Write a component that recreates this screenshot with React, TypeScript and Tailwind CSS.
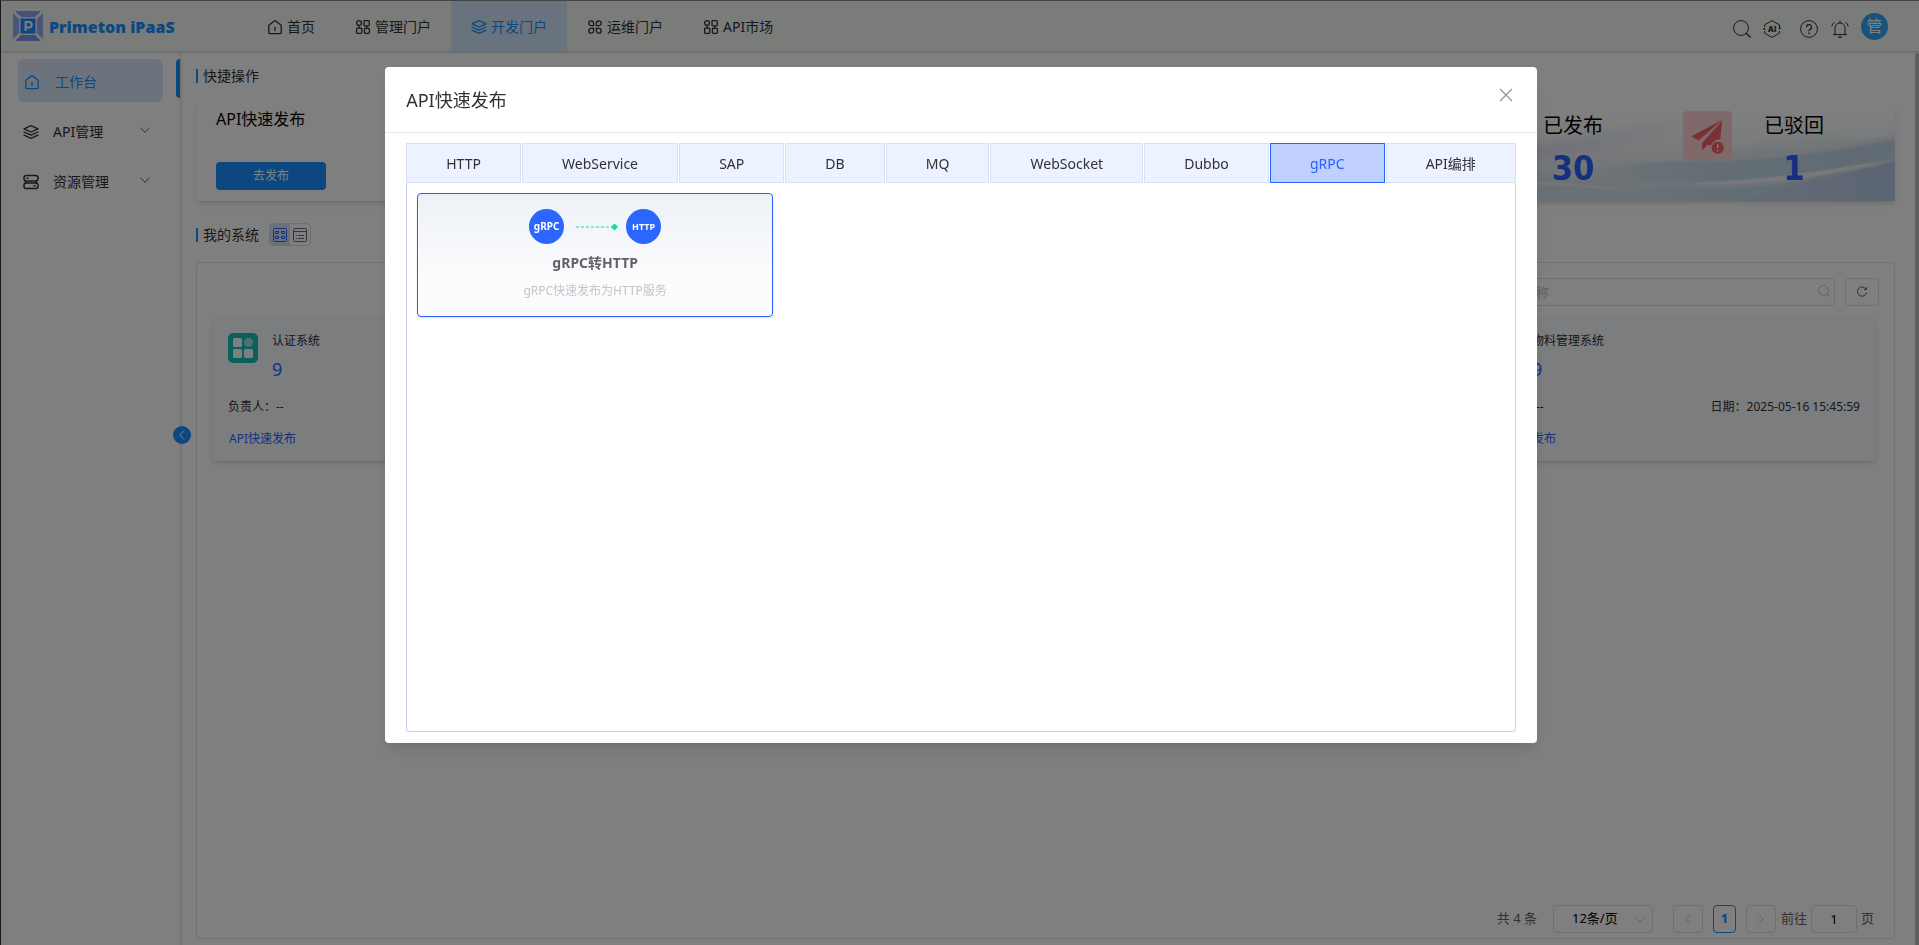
import React from 'react';

type IconProps = { className?: string };

const HomeIcon = ({ className }: IconProps) => (
  <svg viewBox="0 0 16 16" className={className} fill="none" stroke="currentColor" strokeWidth="1.3" strokeLinejoin="round" strokeLinecap="round">
    <path d="M1.8 6.2 8 1.4l6.2 4.8v7.2a1.2 1.2 0 0 1-1.2 1.2H3a1.2 1.2 0 0 1-1.2-1.2z" />
    <path d="M8 8.4v3.2" />
  </svg>
);

const BlocksIcon = ({ className }: IconProps) => (
  <svg viewBox="0 0 16 16" className={className} fill="none" stroke="currentColor" strokeWidth="1.3">
    <circle cx="4" cy="4" r="2.4" />
    <rect x="9" y="1.6" width="5.2" height="5.2" rx=".8" />
    <rect x="1.6" y="9.2" width="5.2" height="5.2" rx=".8" />
    <rect x="9.4" y="9.4" width="5" height="5" rx=".8" />
    <path d="M4 6.3v2.9M11.7 6.7v3" />
  </svg>
);

const CommandIcon = ({ className }: IconProps) => (
  <svg viewBox="0 0 16 16" className={className} fill="none" stroke="currentColor" strokeWidth="1.3">
    <path d="M6.6 6.6H4a2.4 2.4 0 1 1 2.6-2.6zM9.4 6.6H12A2.4 2.4 0 1 0 9.4 4zM6.6 9.4H4A2.4 2.4 0 1 0 6.6 12zM9.4 9.4H12A2.4 2.4 0 1 1 9.4 12z" />
  </svg>
);

const LayersIcon = ({ className }: IconProps) => (
  <svg viewBox="0 0 16 16" className={className} fill="none" stroke="currentColor" strokeWidth="1.3" strokeLinejoin="round" strokeLinecap="round">
    <path d="M8 1.6 15 4.8 8 8 1 4.8z" />
    <path d="M1 8 8 11.2 15 8" />
    <path d="M1 11.2 8 14.4l7-3.2" />
  </svg>
);

const ServerIcon = ({ className }: IconProps) => (
  <svg viewBox="0 0 16 16" className={className} fill="none" stroke="currentColor" strokeWidth="1.5" strokeLinecap="round">
    <rect x="1" y="1.4" width="14" height="5.6" rx="2.4" />
    <rect x="1" y="9" width="14" height="5.6" rx="2.4" />
    <path d="M4 4.2h1M11 11.8h1M2.4 7.4v1.4M13.6 7.4v1.4" />
  </svg>
);

const Chevron = ({ className }: IconProps) => (
  <svg viewBox="0 0 10 10" className={className} fill="none" stroke="currentColor" strokeWidth="1">
    <path d="M.5 2.8 5 7.2l4.5-4.4" />
  </svg>
);

const Logo = () => (
  <svg viewBox="0 0 30 30" className="size-[30px] shrink-0">
    <path d="M2 0h26l-6 6H8z" fill="#8fa3f0" />
    <path d="M2 30h26l-6-6H8z" fill="#8094e6" />
    <path d="M0 2v26l6-6V8z" fill="#98a9f2" />
    <path d="M30 2v26l-6-6V8z" fill="#98a9f2" />
    <rect x="7" y="7" width="16" height="16" fill="#1890ff" stroke="#e6edff" strokeWidth="1" />
    <path d="M12.6 20v-9H16a2.6 2.6 0 0 1 0 5.4h-3.2" fill="none" stroke="#fff" strokeWidth="2" />
  </svg>
);

const navItems = [
  { label: '首页', Icon: HomeIcon },
  { label: '管理门户', Icon: BlocksIcon },
  { label: '开发门户', Icon: LayersIcon, active: true },
  { label: '运维门户', Icon: CommandIcon },
  { label: 'API市场', Icon: BlocksIcon },
];

const Header = () => (
  <header className="relative z-10 flex h-[51px] shrink-0 items-center border-b border-[#d4d8e4] bg-[#f5f9f5] pl-3 pr-[31px] shadow-sm">
    <Logo />
    <span className="ml-1.5 w-[198px] pt-0.5 text-base font-black text-[#1890ff]">Primeton iPaaS</span>
    <nav className="flex h-full flex-1">
      {navItems.map(({ label, Icon, active }) => (
        <a
          key={label}
          href="#"
          className={`flex items-center gap-1 px-5 pt-0.5 text-sm ${active ? 'bg-[#d3e6fa] text-[#1890ff]' : 'text-[#303133]'}`}
        >
          <Icon className="size-4" />
          {label}
        </a>
      ))}
    </nav>
    <div className="flex items-center text-[#303133]">
      <button aria-label="search" className="mr-3 pt-1.5">
        <svg viewBox="0 0 18 18" className="size-[18px]" fill="none" stroke="currentColor">
          <circle cx="8" cy="8" r="7.4" />
          <path d="m13.2 13.2 4.4 4.4" strokeWidth="1.4" />
        </svg>
      </button>
      <button aria-label="assistant" className="mr-[19px] pt-1.5">
        <svg viewBox="0 0 18 18" className="size-[18px]" fill="none" stroke="currentColor">
          <path d="M1.6 7V4.8L9 .6l7.4 4.2V7M1.6 11v2.2L9 17.4l7.4-4.2V11" />
          <circle cx="1.3" cy="9" r="1.1" fill="currentColor" stroke="none" />
          <circle cx="16.7" cy="8.2" r="1.1" fill="currentColor" stroke="none" />
          <text x="9" y="11.8" textAnchor="middle" fontSize="8" fontWeight="800" fontFamily="Inter, sans-serif" fill="currentColor" stroke="none">AI</text>
        </svg>
      </button>
      <button aria-label="help" className="mr-[13px] pt-1.5">
        <svg viewBox="0 0 18 18" className="size-[18px]" fill="none" stroke="currentColor">
          <circle cx="9" cy="9" r="8.4" />
          <path d="M6.5 7.2a2.5 2.5 0 1 1 3.6 2.2c-.8.4-1.1.8-1.1 1.8" strokeWidth="1.3" />
          <circle cx="9" cy="13.3" r=".9" fill="currentColor" stroke="none" />
        </svg>
      </button>
      <button aria-label="notifications" className="mr-3 pt-1.5">
        <svg viewBox="0 0 18 18" className="size-[18px]" fill="none" stroke="currentColor" strokeLinecap="round">
          <path d="M2.5 14.6h13M4 14.4V8a5 5 0 0 1 10 0v6.4M9 3V1M3.2 2.2A7 7 0 0 0 .8 6M14.8 2.2A7 7 0 0 1 17.2 6" />
          <path d="M8 17h2" strokeWidth="1.6" />
        </svg>
      </button>
      <span className="flex size-[27px] items-center justify-center rounded-full bg-[#31a8f5] text-base text-white">管</span>
    </div>
  </header>
);

const Sidebar = () => (
  <aside className="relative w-[180px] shrink-0 border-r border-[#e0e0e0] text-sm text-[#303133] shadow-md">
    <ul className="pt-[7px]">
      <li className="relative px-[17px]">
        <a href="#" className="flex h-[43px] items-center rounded-md bg-[#d9e7fb] pl-1.5 pt-0.5 text-[#1890ff]">
          <HomeIcon className="size-4" />
          <span className="ml-[15px]">工作台</span>
        </a>
        <span className="absolute right-0 top-0 h-[39px] w-1 rounded-l bg-[#1890ff]" />
      </li>
      {[
        { label: 'API管理', Icon: LayersIcon },
        { label: '资源管理', Icon: ServerIcon },
      ].map(({ label, Icon }) => (
        <li key={label} className="mt-[7px]">
          <a href="#" className="flex h-[43px] items-center pl-[22px] pr-[30px] pt-0.5">
            <Icon className="size-4" />
            <span className="ml-3.5 flex-1">{label}</span>
            <Chevron className="mb-1 size-2.5 text-[#606266]" />
          </a>
        </li>
      ))}
    </ul>
    <button
      aria-label="collapse"
      className="absolute -right-[11px] top-[374px] z-10 flex size-[18px] items-center justify-center rounded-full bg-[#1890ff] text-white"
    >
      <Chevron className="size-2.5 rotate-90" />
    </button>
  </aside>
);

const SectionTitle = ({ children }: { children: React.ReactNode }) => (
  <h2 className="flex items-center gap-[5px] text-sm text-[#303133]">
    <span className="h-3.5 w-0.5 bg-[#1890ff]" />
    {children}
  </h2>
);

const Waves = () => (
  <svg viewBox="0 0 600 100" preserveAspectRatio="none" className="absolute inset-y-0 right-0 h-full w-[600px]">
    <defs>
      <linearGradient id="sky" x1="0" y1="0" x2="0" y2="1">
        <stop offset="0" stopColor="#fff" stopOpacity="0" />
        <stop offset="0.5" stopColor="#eff2f5" />
        <stop offset="1" stopColor="#d3e1ec" />
      </linearGradient>
      <linearGradient id="lilac" x1="0" y1="0" x2="1" y2="0">
        <stop offset="0" stopColor="#d6d8ec" />
        <stop offset="1" stopColor="#e8ebf2" stopOpacity="0" />
      </linearGradient>
      <linearGradient id="band" x1="0" y1="0" x2="1" y2="0">
        <stop offset="0" stopColor="#dde8f0" />
        <stop offset="0.4" stopColor="#c8dbe8" />
        <stop offset="1" stopColor="#c1d6e8" />
      </linearGradient>
      <linearGradient id="rise" x1="0" y1="1" x2="0" y2="0">
        <stop offset="0" stopColor="#d0e0ec" />
        <stop offset="1" stopColor="#f2f5f8" stopOpacity="0" />
      </linearGradient>
      <linearGradient id="deep" x1="0" y1="0" x2="1" y2="0">
        <stop offset="0" stopColor="#c6d8ea" />
        <stop offset="1" stopColor="#b8cae6" />
      </linearGradient>
      <filter id="soft" x="-10%" y="-20%" width="120%" height="140%">
        <feGaussianBlur stdDeviation="5" />
      </filter>
      <filter id="softer" x="-5%" y="-10%" width="110%" height="120%">
        <feGaussianBlur stdDeviation="1" />
      </filter>
    </defs>
    <rect width="600" height="100" fill="url(#sky)" />
    <path d="M180 52C270 46 330 22 440 12 360 40 290 56 180 64z" fill="url(#lilac)" filter="url(#soft)" />
    <path d="M400 60C470 46 540 26 620 18v46H400z" fill="url(#rise)" filter="url(#soft)" />
    <path d="M300 70C350 58 400 61 450 58 510 54 560 42 600 38v62H300z" fill="url(#band)" filter="url(#softer)" />
    <path d="M420 58C490 54 550 44 600 34v4C550 48 490 59 420 60z" fill="#e0e8ee" filter="url(#softer)" />
    <path d="M242 72C330 82 430 84 500 74L600 58v4L480 84C400 92 320 86 242 82z" fill="#dbe5ec" filter="url(#softer)" />
    <path d="M400 82C470 79 540 68 588 60 540 74 480 84 400 84z" fill="#edf1f3" />
    <path d="M440 100C490 86 550 74 600 60v40z" fill="url(#deep)" />
    <path d="M242 78C310 82 350 92 380 100H242z" fill="#d3e1ec" />
    <path d="M242 80C310 83 350 92 380 99 340 90 300 86 242 84z" fill="#e2e9f0" />
  </svg>
);

const RejectedIcon = () => (
  <svg viewBox="0 0 48 48" className="size-[49px]">
    <rect width="48" height="48" rx="4" fill="#ffd3d6" />
    <path d="M38.5 8.5 8 25l7.5 4z" fill="#f0626a" />
    <path d="M38.5 9 18.5 31.5 19 38.5l5-5.5 4.5 1a7 7 0 0 1 8-6z" fill="#f0626a" />
    <circle cx="34" cy="36" r="6.5" fill="#f0626a" stroke="#ffd3d6" />
    <path d="M34 32.5v4M34 38.2v1.5" stroke="#fff" strokeWidth="1.5" />
  </svg>
);

const Stat = ({ label, value }: { label: string; value: number }) => (
  <div className="text-center">
    <div className="text-xl leading-7 text-black">{label}</div>
    <div className="mt-1.5 font-['DejaVu_Sans_Condensed','DejaVu_Sans',sans-serif] text-[34px] font-bold leading-[44px] text-[#2b61ff]">{value}</div>
  </div>
);

const QuickActions = () => (
  <div className="relative mt-[15px] flex h-[100px] justify-between rounded shadow-md">
    <div className="relative z-10 pl-5 pt-1.5">
      <h3 className="text-base text-black">API快速发布</h3>
      <button className="mt-[31px] block h-7 w-[110px] rounded bg-[#1890ff] text-xs text-white">去发布</button>
    </div>
    <Waves />
    <div className="relative flex pr-[71px] pt-[11px]">
      <Stat label="已发布" value={30} />
      <div className="-mt-px ml-20 mr-8">
        <RejectedIcon />
      </div>
      <Stat label="已驳回" value={1} />
    </div>
  </div>
);

const SystemCard = ({ name, className = '' }: { name: string; className?: string }) => (
  <article className={`h-[143px] rounded border border-[#eff4fb] bg-[#f7faff] px-[15px] text-xs text-[#303133] shadow-md ${className}`}>
    <div className="flex pt-3.5">
      <svg viewBox="0 0 30 30" className="size-[30px]">
        <rect width="30" height="30" rx="5" fill="#13c2b8" />
        <rect x="5" y="5" width="9" height="9" rx="1.5" fill="#fff" />
        <circle cx="20.5" cy="9.5" r="4.5" fill="#9fe3de" />
        <rect x="5" y="16" width="9" height="9" rx="1.5" fill="#fff" />
        <rect x="16" y="16" width="9" height="9" rx="1.5" fill="#fff" />
      </svg>
      <div className="ml-3.5">
        <h3 className="leading-4">{name}</h3>
        <div className="mt-1.5 text-lg leading-7 text-[#2b61ff]">9</div>
      </div>
    </div>
    <div className="mt-4 flex justify-between leading-4">
      <span>负责人：--</span>
      <span>日期：2025-05-16 15:45:59</span>
    </div>
    <a href="#" className="ml-px mt-4 inline-block leading-4 text-[#2b61ff]">API快速发布</a>
  </article>
);

const Pagination = () => (
  <div className="flex h-7 items-center text-[13px] text-[#606266]">
    <span className="mr-4">共 4 条</span>
    <div className="relative mr-5">
      <select aria-label="每页条数" className="h-7 w-[100px] appearance-none rounded-sm border border-[#dcdfe6] pl-[18px] text-black">
        <option>12条/页</option>
      </select>
      <Chevron className="absolute right-2 top-2.5 size-2.5 text-[#c0c4cc]" />
    </div>
    <button aria-label="上一页" className="flex h-7 w-[30px] items-center justify-center rounded-sm border border-[#dcdfe6] text-[#c0c4cc]">
      <Chevron className="size-2.5 rotate-90" />
    </button>
    <button className="mx-2.5 h-7 w-[23px] rounded border border-[#1890ff] font-bold text-[#1890ff]">1</button>
    <button aria-label="下一页" className="flex h-7 w-[30px] items-center justify-center rounded-sm border border-[#dcdfe6] text-[#c0c4cc]">
      <Chevron className="size-2.5 -rotate-90" />
    </button>
    <label className="ml-[5px] flex items-center gap-1">
      前往
      <input defaultValue="1" className="h-7 w-[46px] rounded-sm border border-[#dcdfe6] text-center text-black" />
      页
    </label>
  </div>
);

const Workbench = () => (
  <main className="flex flex-1 flex-col pb-[6px] pl-[15px] pr-[24px] pt-3.5">
    <SectionTitle>快捷操作</SectionTitle>
    <QuickActions />
    <div className="mt-[22px] flex items-center gap-2.5">
      <SectionTitle>我的系统</SectionTitle>
      <div className="flex h-[23px] w-[42px] overflow-hidden rounded-sm border border-[#dcdfe6]">
        <button aria-label="卡片视图" className="flex w-5 items-center justify-center bg-[#d9e1f8] text-[#2b61ff]">
          <svg viewBox="0 0 14 14" className="size-3.5" fill="none" stroke="currentColor">
            <rect x=".5" y=".5" width="13" height="13" rx="1" />
            <path d="M2.5 3.5h3v2h-3zM8.5 3.5h3v2h-3zM2.5 8.5h3v2h-3zM8.5 8.5h3v2h-3z" />
          </svg>
        </button>
        <button aria-label="列表视图" className="flex w-5 items-center justify-center text-[#606a80]">
          <svg viewBox="0 0 14 14" className="size-3.5" fill="none" stroke="currentColor">
            <rect x=".5" y=".5" width="13" height="13" rx="1" />
            <path d="M0 3.5h14M3 7.5h1M5 7.5h6M3 10.5h1M5 10.5h6" />
          </svg>
        </button>
      </div>
    </div>
    <section className="mt-4 flex flex-1 flex-col rounded border border-[#dfe2ea] pb-[5px] pl-[15px] pr-[18px] pt-[15px]">
      <div className="-mr-[3px] flex justify-end gap-2.5">
        <div className="relative">
          <input placeholder="请输入系统名称" className="h-7 w-[392px] rounded-sm border border-[#dcdfe6] pl-3.5 text-[13px] placeholder:text-[#c0c4cc]" />
          <svg viewBox="0 0 12 12" className="absolute right-[5px] top-[7px] size-3 text-[#c0c4cc]" fill="none" stroke="currentColor">
            <circle cx="5.5" cy="5.5" r="5" />
            <path d="m9 9 2.5 2.5" />
          </svg>
        </div>
        <button aria-label="刷新" className="flex h-7 w-[34px] items-center justify-center rounded-sm border border-[#dcdfe6] text-[#606266]">
          <svg viewBox="0 0 12 12" className="size-3" fill="none" stroke="currentColor">
            <path d="M10 3.2A4.6 4.6 0 1 0 10.6 6.500M10.500 1v2.600H7.900" />
          </svg>
        </button>
      </div>
      <div className="mt-3 grid grid-cols-4 gap-4">
        <SystemCard name="认证系统" />
        <SystemCard name="物料管理系统" className="col-start-4" />
      </div>
      <div className="mt-auto flex justify-end pr-0.5">
        <Pagination />
      </div>
    </section>
  </main>
);

const tabs = ['HTTP', 'WebService', 'SAP', 'DB', 'MQ', 'WebSocket', 'Dubbo', 'gRPC', 'API编排'];

const PublishDialog = () => (
  <div className="fixed inset-0 z-20 bg-black/50 pl-[3px]">
    <div role="dialog" aria-label="API快速发布" className="mx-auto mt-[67px] w-[calc(60%+2px)] rounded bg-white shadow-lg">
      <div className="flex h-[66px] items-center justify-between border-b border-[#e4e7ed] px-[21px]">
        <h1 className="text-lg text-[#303133]">API快速发布</h1>
        <button aria-label="关闭" className="mb-2.5 mr-[3px] text-[#909399]">
          <svg viewBox="0 0 14 14" className="size-3.5" fill="none" stroke="currentColor" strokeWidth="1.2">
            <path d="m1 1 12 12M13 1 1 13" />
          </svg>
        </button>
      </div>
      <div className="px-[21px] pb-[11px] pt-2.5">
        <div role="tablist" className="flex h-10 gap-px">
          {tabs.map((tab) => (
            <button
              key={tab}
              role="tab"
              aria-selected={tab === 'gRPC'}
              className={`flex-auto border px-9 pt-0.5 text-sm ${
                tab === 'gRPC' ? 'border-[#2b61ff] bg-[#bfd0ff] text-[#2b61ff]' : 'border-[#d7e1f2] bg-[#ecf2ff] text-[#303133]'
              }`}
            >
              {tab}
            </button>
          ))}
        </div>
        <div className="-mt-px grid h-[550px] grid-cols-3 content-start gap-2.5 rounded border border-t-0 border-[#c3d0e8] px-2.5 pb-2.5 pt-[11px]">
          <button className="flex h-[124px] flex-col items-center rounded border border-[#2b61ff] bg-linear-to-b from-[#edf1f7] to-[#fcfcfd] to-70% pt-[15px] shadow-sm">
            <span className="flex items-center">
              <span className="flex size-[35px] items-center justify-center rounded-full bg-[#2b66ff] text-[10px] font-bold text-white">gRPC</span>
              <svg viewBox="0 0 42 8" className="ml-3 mr-2 h-2 w-[42px]">
                <path d="M0 4h36" stroke="#13dba6" strokeDasharray="3 2" />
                <path d="m38.5.5 3.5 3.5-3.5 3.5L35 4z" fill="#13dba6" />
              </svg>
              <span className="flex size-[35px] items-center justify-center rounded-full bg-[#2b66ff] text-[9px] font-bold text-white">HTTP</span>
            </span>
            <span className="mt-[9px] text-sm font-bold text-[#606266]">gRPC转HTTP</span>
            <span className="mt-2.5 text-xs text-[#c0c4cc]">gRPC快速发布为HTTP服务</span>
          </button>
        </div>
      </div>
    </div>
  </div>
);

const App: React.FC = () => (
  <div className="relative flex min-h-screen flex-col border-l border-t border-l-[#333] border-t-[#8c8c8c] bg-white font-['Noto_Sans','Noto_Sans_CJK_SC',sans-serif]">
    <Header />
    <div className="flex flex-1">
      <Sidebar />
      <Workbench />
    </div>
    <div className="absolute bottom-0 right-0 top-[52px] w-1 rounded-t bg-[#b9bbc2]" />
    <PublishDialog />
  </div>
);

export default App;
